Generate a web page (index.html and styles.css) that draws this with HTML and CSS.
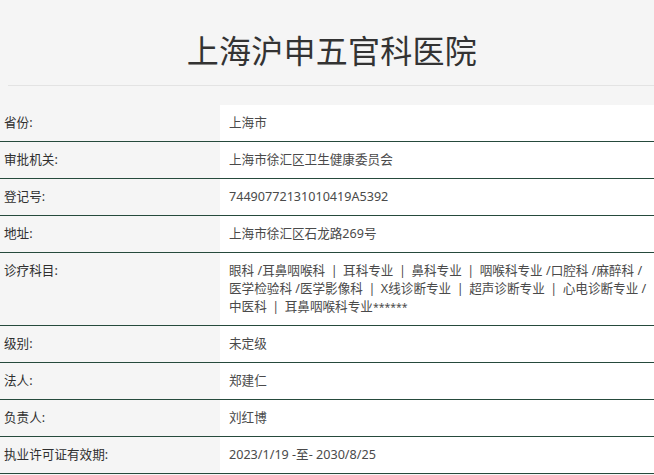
FILE: index.html
```html
<!DOCTYPE html>
<html lang="zh-CN">
<head>
<meta charset="utf-8">
<title>上海沪申五官科医院</title>
<link rel="stylesheet" href="styles.css">
</head>
<body>
<div class="page">
  <h1 class="title">上海沪申五官科医院</h1>
  <div class="divider"></div>
  <div class="info">
    <div class="row"><div class="label">省份:</div><div class="value">上海市</div></div>
    <div class="row"><div class="label">审批机关:</div><div class="value">上海市徐汇区卫生健康委员会</div></div>
    <div class="row"><div class="label">登记号:</div><div class="value">74490772131010419A5392</div></div>
    <div class="row"><div class="label">地址:</div><div class="value">上海市徐汇区石龙路269号</div></div>
    <div class="row"><div class="label">诊疗科目:</div><div class="value">眼科 /耳鼻咽喉科<span class="sep">|</span>耳科专业<span class="sep">|</span>鼻科专业<span class="sep">|</span>咽喉科专业 /口腔科 /麻醉科 /<br>医学检验科 /医学影像科<span class="sep">|</span>X线诊断专业<span class="sep">|</span>超声诊断专业<span class="sep">|</span>心电诊断专业 /<br>中医科<span class="sep">|</span>耳鼻咽喉科专业<span class="stars">******</span></div></div>
    <div class="row"><div class="label">级别:</div><div class="value">未定级</div></div>
    <div class="row"><div class="label">法人:</div><div class="value">郑建仁</div></div>
    <div class="row"><div class="label">负责人:</div><div class="value">刘红博</div></div>
    <div class="row"><div class="label">执业许可证有效期:</div><div class="value">2023/1/19 -至- 2030/8/25</div></div>
  </div>
</div>
</body>
</html>
```

FILE: styles.css
```css
html, body {
  margin: 0;
  padding: 0;
  background: #f5f5f5;
  overflow: hidden;
}
body {
  font-family: "Microsoft YaHei", "Noto Sans", "Noto Sans CJK SC", sans-serif;
  font-size: 12.6px;
  color: #444;
}
.page {
  width: 654px;
}
.title {
  margin: 0;
  padding: 31px 0 0 10px;
  height: 40px;
  line-height: 40px;
  font-size: 32px;
  font-weight: normal;
  color: #333;
  text-align: center;
  letter-spacing: 0.25px;
}
.divider {
  margin: 14px 0 19px 8px;
  height: 1px;
  background: #e3e3e3;
}
.info {
  display: flex;
  flex-direction: column;
}
.row {
  display: grid;
  grid-template-columns: 220px 1fr;
  border-bottom: 1px solid #264a3c;
}
.label {
  padding: 9px 4px;
  line-height: 18px;
  color: #2f2f2f;
}
.value {
  background: #fff;
  padding: 9px 0 9px 9px;
  line-height: 18px;
  color: #4a4a4a;
  white-space: nowrap;
  overflow: hidden;
}
.sep {
  display: inline-block;
  margin: 0 5.5px;
}
.stars {
  font-size: 10.5px;
}
```
